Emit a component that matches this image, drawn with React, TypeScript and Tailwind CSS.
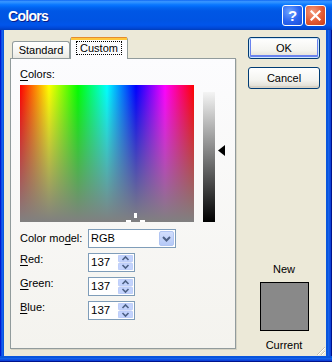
import type { ReactNode } from "react"

const sans = "font-['Liberation_Sans',Arial,sans-serif]"

function U({ children }: { children: ReactNode }) {
  return <span className="underline decoration-1 underline-offset-[2px]">{children}</span>
}

function XpButton({ label, primary }: { label: string; primary?: boolean }) {
  return (
    <div
      className={
        "flex h-[22px] w-[72px] items-center justify-center rounded-[3px] border border-[#003c74] bg-[linear-gradient(to_bottom,#ffffff,#f4f4f0_60%,#e3e1d8_90%,#d6d0c5)] text-[11px] text-black " +
        (primary
          ? "shadow-[inset_0_0_0_1px_#cee7ff,inset_0_-1px_0_2px_#6982ee]"
          : "shadow-[inset_0_-2px_0_#d8d2c6]")
      }
    >
      {label}
    </div>
  )
}

function SpinArrows() {
  return (
    <svg width="15" height="15" viewBox="0 0 15 15" className="shrink-0">
      <rect x="0" y="0" width="15" height="7" rx="2" fill="#c3d3fd" stroke="#b1c5f2" strokeWidth="0.6" />
      <rect x="0" y="8" width="15" height="7" rx="2" fill="#c3d3fd" stroke="#b1c5f2" strokeWidth="0.6" />
      <path d="M4.5 5 L7.5 2 L10.5 5" fill="none" stroke="#4d6185" strokeWidth="1.6" />
      <path d="M4.5 10 L7.5 13 L10.5 10" fill="none" stroke="#4d6185" strokeWidth="1.6" />
    </svg>
  )
}

function Spin({ value }: { value: string }) {
  return (
    <div className="flex h-[19px] w-[47px] items-center border border-[#7f9db9] bg-white pl-[2px] pr-px">
      <span className="flex-1 text-[11.5px] leading-none">{value}</span>
      <SpinArrows />
    </div>
  )
}

function Row({ label, children }: { label: ReactNode; children: ReactNode }) {
  return (
    <div className="flex h-[19px] items-center">
      <div className="w-[68px] -translate-y-[3px]">{label}</div>
      {children}
    </div>
  )
}

export default function App() {
  return (
    <div className={"flex h-[362px] w-[332px] flex-col bg-[#0a3fe0] " + sans}>
      {/* title bar */}
      <div className="relative flex h-[30px] items-center bg-[linear-gradient(to_bottom,#0058ee_0px,#3a93ff_1px,#288eff_3px,#127dff_4px,#036ffc_6px,#0262ee_8px,#0057e5_11px,#0054e3_20px,#0055eb_25px,#0048d8_28px,#003dbb_30px)] pl-[8px] pr-[6px]">
        <span className="flex-1 pt-[3px] text-[14px] font-bold tracking-[-0.7px] text-white [text-shadow:1px_1px_0_#0a1e8a]">
          Colors
        </span>
        <div className="flex items-center gap-[2px]">
          <div className="flex h-[21px] w-[21px] items-center justify-center rounded-[3px] border border-white bg-[radial-gradient(circle_at_35%_30%,#6fa3ff,#2a64f0_55%,#1a4fd8)] text-[15px] font-bold leading-none text-white">
            ?
          </div>
          <div className="flex h-[21px] w-[21px] items-center justify-center rounded-[3px] border border-white bg-[radial-gradient(circle_at_35%_30%,#f49b7d,#e25a34_55%,#c83d16)]">
            <svg width="11" height="11" viewBox="0 0 11 11">
              <path d="M1.5 1.5 L9.5 9.5 M9.5 1.5 L1.5 9.5" stroke="#fff" strokeWidth="2.2" strokeLinecap="square" />
            </svg>
          </div>
        </div>
      </div>

      <div className="flex flex-1">
        <div className="w-[4px] bg-[linear-gradient(to_right,#0019cf_1px,#0b40e4_1px,#166aee_3px,#0855dd_3px)]" />
        {/* dialog body */}
        <div className="relative flex flex-1 bg-[#ece9d8] text-[11px] text-black">
          {/* tab control */}
          <div className="ml-[6px] mt-[7px] flex w-[226px] flex-col">
            <div className="flex h-[21px] items-end">
              <div className="ml-[2px] flex h-[17px] w-[58px] items-center justify-center rounded-t-[3px] border border-b-0 border-[#919b9c] bg-[linear-gradient(to_bottom,#ffffff,#f3f3ef_70%,#e9e8e1)]">
                Standard
              </div>
              <div className="relative z-10 -mb-px flex h-[22px] w-[58px] flex-col rounded-t-[3px] border-x border-[#919b9c] bg-[#fcfcfe]">
                <div className="h-px rounded-t-[3px] bg-[#e68b2c]" />
                <div className="h-[2px] bg-[#ffc73c]" />
                <div className="flex flex-1 items-start justify-center pt-[1px]">
                  <span className="border border-dotted border-black px-[3px] leading-[12px]">Custom</span>
                </div>
              </div>
            </div>
            <div className="flex h-[291px] flex-col border border-[#919b9c] bg-[linear-gradient(to_bottom,#fcfcfe,#f4f3ee)] pl-[9px] pt-[9px] shadow-[1px_1px_0_#d6d3c4]">
              <div className="leading-[13px]">
                <U>C</U>olors:
              </div>
              <div className="mt-[4px] flex items-start">
                <div className="relative h-[137px] w-[174px] bg-[linear-gradient(to_bottom,rgba(128,128,128,0),#808080),linear-gradient(to_right,#f00,#ff0,#0f0,#0ff,#00f,#f0f,#f00)]">
                  <div className="absolute left-[114px] top-[128px] h-[5px] w-[3px] bg-white" />
                  <div className="absolute left-[106px] top-[135px] h-[2px] w-[5px] bg-white" />
                  <div className="absolute left-[120px] top-[135px] h-[2px] w-[5px] bg-white" />
                </div>
                <div className="ml-[9px] mt-[7px] h-[130px] w-[12px] bg-[linear-gradient(to_bottom,#f4f4f4,#000000)]" />
                <svg width="7" height="11" viewBox="0 0 7 11" className="ml-[3px] mt-[60px]">
                  <path d="M0 5.5 L7 0 L7 11 Z" fill="#000" />
                </svg>
              </div>
              <div className="mt-[7px] flex flex-col gap-[5px]">
                <div className="flex h-[19px] items-center">
                  <div className="w-[68px]">
                    Color mo<U>d</U>el:
                  </div>
                  <div className="flex h-[19px] w-[88px] items-center border border-[#7f9db9] bg-white pl-[2px] pr-px">
                    <span className="flex-1">RGB</span>
                    <div className="flex h-[15px] w-[15px] items-center justify-center rounded-[2px] border border-[#b1c5f2] bg-[linear-gradient(to_bottom,#d2defc,#b5c9f7)]">
                      <svg width="9" height="6" viewBox="0 0 9 6">
                        <path d="M1 1 L4.5 4.5 L8 1" fill="none" stroke="#4d6185" strokeWidth="2" />
                      </svg>
                    </div>
                  </div>
                </div>
                <Row label={<><U>R</U>ed:</>}>
                  <Spin value="137" />
                </Row>
                <Row label={<><U>G</U>reen:</>}>
                  <Spin value="137" />
                </Row>
                <Row label={<><U>B</U>lue:</>}>
                  <Spin value="137" />
                </Row>
              </div>
            </div>
          </div>

          {/* right column */}
          <div className="ml-[12px] mt-[7px] flex w-[72px] flex-col items-center">
            <XpButton label="OK" primary />
            <div className="mt-[8px]">
              <XpButton label="Cancel" />
            </div>
            <div className="mt-[174px] leading-[13px]">New</div>
            <div className="mt-[6px] h-[49px] w-[49px] border border-black bg-[#898989]" />
            <div className="mt-[8px] leading-[13px]">Current</div>
          </div>

          <svg width="12" height="12" viewBox="0 0 12 12" className="absolute bottom-0 right-0">
            <path d="M11 3 L3 11 M11 7 L7 11" stroke="#c5c2b2" strokeWidth="1" />
            <path d="M11 4 L4 11 M11 8 L8 11" stroke="#ffffff" strokeWidth="1" />
          </svg>
        </div>
        <div className="w-[6px] bg-[linear-gradient(to_left,#00138c_1px,#0a3ad4_1px,#166aee_4px,#0855dd_4px)]" />
      </div>
      <div className="h-[6px] bg-[linear-gradient(to_top,#00138c_1px,#0a3ad4_1px,#166aee_4px,#0855dd_4px)]" />
    </div>
  )
}
